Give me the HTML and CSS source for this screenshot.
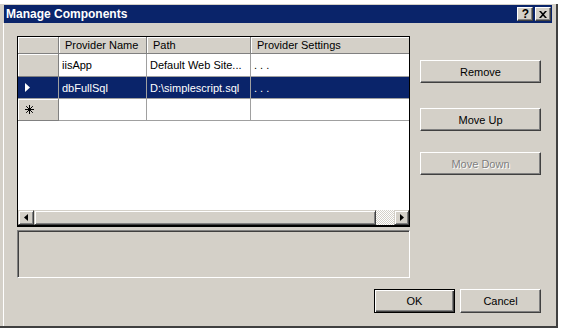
FILE: index.html
```html
<!DOCTYPE html>
<html>
<head>
<meta charset="utf-8">
<link rel="stylesheet" href="styles.css">
</head>
<body>
<div class="window">
  <div class="titlebar">
    <span class="title">Manage Components</span>
    <div class="tb-buttons">
      <span class="tb-btn tb-help">?</span>
      <span class="tb-btn tb-close"><svg width="8" height="7" viewBox="0 0 8 7"><path d="M0 0h2l2 2.2L6 0h2L5 3.5 8 7H6L4 4.8 2 7H0l3-3.5z" fill="#000"/></svg></span>
    </div>
  </div>
  <div class="client">
    <div class="main">
      <div class="leftcol">
        <div class="grid">
          <div class="grid-body">
            <div class="row hdr">
              <div class="rh"></div>
              <div class="c c1">Provider Name</div>
              <div class="c c2">Path</div>
              <div class="c c3">Provider Settings</div>
            </div>
            <div class="row r1">
              <div class="rh"></div>
              <div class="c c1">iisApp</div>
              <div class="c c2">Default Web Site...</div>
              <div class="c c3">. . .</div>
            </div>
            <div class="row r2 sel">
              <div class="rh"><svg width="5" height="9" viewBox="0 0 5 9"><path d="M0 0L5 4.5 0 9z" fill="#fff"/></svg></div>
              <div class="c c1">dbFullSql</div>
              <div class="c c2">D:\simplescript.sql</div>
              <div class="c c3">. . .</div>
            </div>
            <div class="row r3">
              <div class="rh"><svg width="9" height="9" viewBox="0 0 9 9"><path d="M4.5 0v9M0 4.5h9M1.2 1.2l6.6 6.6M7.8 1.2L1.2 7.8" stroke="#000" stroke-width="1"/></svg></div>
              <div class="c c1"></div>
              <div class="c c2"></div>
              <div class="c c3"></div>
            </div>
          </div>
          <div class="hscroll">
            <div class="sb-btn"><svg width="4" height="7" viewBox="0 0 4 7"><path d="M4 0v7L0 3.5z" fill="#000"/></svg></div>
            <div class="sb-thumb"></div>
            <div class="sb-track"></div>
            <div class="sb-btn sb-right"><svg width="4" height="7" viewBox="0 0 4 7"><path d="M0 0v7l4-3.5z" fill="#000"/></svg></div>
          </div>
        </div>
        <div class="msg"></div>
      </div>
      <div class="rightcol">
        <button class="btn btn-remove">Remove</button>
        <button class="btn btn-up">Move Up</button>
        <button class="btn btn-down" disabled>Move Down</button>
      </div>
    </div>
    <div class="footer">
      <button class="btn btn-ok">OK</button>
      <button class="btn btn-cancel">Cancel</button>
    </div>
  </div>
</div>
</body>
</html>
```

FILE: styles.css
```css
* { box-sizing: border-box; }
html, body { margin: 0; padding: 0; background: #fff; }
body {
  font-family: "Liberation Sans", Arial, sans-serif;
  font-size: 11px;
  color: #000;
}
.window {
  margin-top: 4px;
  width: 558px;
  height: 324px;
  padding: 1px 4px 0 4px;
  background: #d4d0c8;
  border-right: 2px solid #404040;
  border-bottom: 2px solid #404040;
  display: flex;
  flex-direction: column;
}
.titlebar {
  height: 18px;
  background: #0a246a;
  color: #fff;
  display: flex;
  align-items: center;
  justify-content: space-between;
  padding: 0 1px 0 2px;
  flex: none;
}
.title {
  font-weight: bold;
  font-size: 12px;
}
.tb-buttons { display: flex; gap: 2px; }
.tb-btn {
  width: 16px;
  height: 14px;
  background: #d4d0c8;
  border: 1px solid;
  border-color: #fff #404040 #404040 #fff;
  box-shadow: inset -1px -1px #808080;
  display: flex;
  align-items: center;
  justify-content: center;
  color: #000;
  font-weight: bold;
  font-size: 12px;
  line-height: 1;
}
.tb-help { padding-left: 1px; }
.client {
  flex: 1;
  box-shadow: -1px 0 0 #fff;
  padding: 13px 11px 0 13px;
}
.main { display: flex; gap: 10px; }
.grid {
  width: 393px;
  height: 191px;
  border: 1px solid #000;
  border-bottom-width: 2px;
  background: #fff;
  display: flex;
  flex-direction: column;
}
.grid-body { flex: 1; }
.row { display: flex; height: 22px; }
.row.hdr { height: 17px; }
.row.r1 { height: 23px; }
.rh, .c {
  border-right: 1px solid #a0a0a0;
  border-bottom: 1px solid #a0a0a0;
  display: flex;
  align-items: center;
  white-space: nowrap;
  overflow: hidden;
  padding-left: 3px;
}
.rh {
  width: 41px;
  background: #d4d0c8;
  border-color: #808080;
  box-shadow: inset 1px 1px #fff;
  padding-left: 7px;
}
.c1 { width: 88px; }
.c2 { width: 104px; }
.c3 { width: 158px; border-right: none; }
.hdr .c {
  background: #d4d0c8;
  border-color: #808080;
  box-shadow: inset 1px 1px #fff;
  padding-left: 6px;
}
.sel .c, .sel .rh {
  background: #0a246a;
  color: #fff;
}
.sel .rh { box-shadow: none; border-color: #a0a0a0; }
.hscroll { display: flex; height: 15px; flex: none; }
.sb-btn, .sb-thumb {
  background: #d4d0c8;
  border: 1px solid;
  border-color: #d4d0c8 #404040 #404040 #d4d0c8;
  box-shadow: inset 1px 1px #fff, inset -1px -1px #808080;
}
.sb-btn {
  width: 16px;
  display: flex;
  align-items: center;
  justify-content: center;
}
.sb-right { width: 15px; }
.sb-thumb { flex: 1; }
.sb-track {
  width: 18px;
  background-color: #d4d0c8;
  background-image: repeating-conic-gradient(#fff 0 25%, #d4d0c8 0 50%);
  background-size: 2px 2px;
}
.msg {
  margin-top: 3px;
  width: 393px;
  height: 48px;
  border: 1px solid;
  border-color: #808080 #fff #fff #808080;
  box-shadow: inset 1px 1px #404040, inset -1px -1px #d4d0c8;
}
.rightcol {
  display: flex;
  flex-direction: column;
  padding-top: 24px;
}
.btn {
  font-family: "Liberation Sans", Arial, sans-serif;
  font-size: 11px;
  color: #000;
  background: #d4d0c8;
  border: 1px solid;
  border-color: #fff #404040 #404040 #fff;
  box-shadow: inset -1px -1px #808080;
  padding: 0;
  margin: 0;
  width: 121px;
  height: 23px;
}
.btn-up { margin-top: 25px; }
.btn-down { margin-top: 21px; }
.btn:disabled {
  color: #808080;
  text-shadow: 1px 1px #fff;
}
.footer {
  display: flex;
  justify-content: flex-end;
  gap: 5px;
  margin-top: 11px;
}
.btn-ok, .btn-cancel { width: 81px; height: 24px; }
.btn-ok {
  border-color: #000;
  box-shadow: inset 1px 1px #fff, inset -1px -1px #404040, inset -2px -2px #808080;
}
```
